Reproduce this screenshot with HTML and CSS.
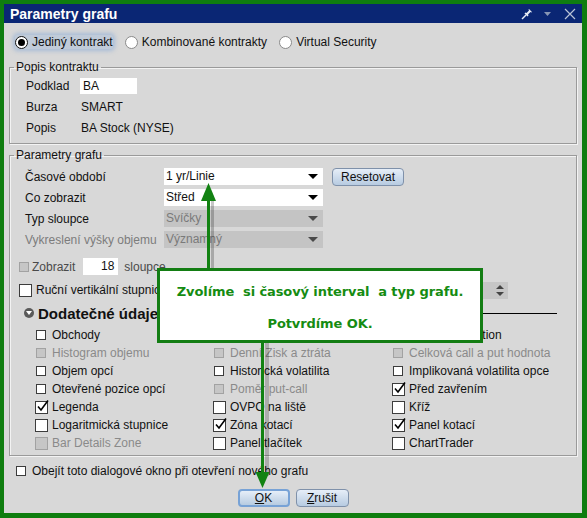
FILE: index.html
```html
<!DOCTYPE html>
<html>
  <head>
    <title>Parametry grafu</title>
    <link rel="stylesheet" href="styles.css">
  </head>
  <body>
    <div class="window">
      <div class="titlebar">
        <span class="title">Parametry grafu</span>
        <div class="tb-icons">
          <svg width="12" height="12" viewBox="0 0 12 12"><path d="M1 11 L5 7" stroke="#e8ecf4" stroke-width="1.4"/><path d="M3.5 5.5 L6.5 8.5 L7.5 7.5 L7 6.5 L9.5 4 L10.5 4.5 L11 4 L8 1 L7.5 1.5 L8 2.5 L5.5 5 L4.5 4.5 Z" fill="#e8ecf4"/></svg>
          <svg width="7" height="4" viewBox="0 0 7 4"><path d="M0 0 H7 L3.5 4 Z" fill="#8796b5"/></svg>
          <svg width="12" height="12" viewBox="0 0 12 12"><path d="M1 1 L11 11 M11 1 L1 11" stroke="#b9c2d6" stroke-width="1.2"/></svg>
        </div>
      </div>

      <div class="modes">
        <label class="radio focus"><span class="rb on"></span>Jediný kontrakt</label>
        <label class="radio"><span class="rb"></span>Kombinované kontrakty</label>
        <label class="radio"><span class="rb"></span>Virtual Security</label>
      </div>

      <fieldset class="group contract">
        <legend>Popis kontraktu</legend>
        <div class="kv"><span class="k">Podklad</span><span class="field">BA</span></div>
        <div class="kv"><span class="k">Burza</span><span class="v">SMART</span></div>
        <div class="kv"><span class="k">Popis</span><span class="v">BA Stock (NYSE)</span></div>
      </fieldset>

      <fieldset class="group chart">
        <legend>Parametry grafu</legend>
        <div class="prow">
          <span class="plabel">Časové období</span>
          <span class="select">1 yr/Linie<i class="caret"></i></span>
          <button class="btn reset">Resetovat</button>
        </div>
        <div class="prow">
          <span class="plabel">Co zobrazit</span>
          <span class="select">Střed<i class="caret"></i></span>
        </div>
        <div class="prow">
          <span class="plabel">Typ sloupce</span>
          <span class="select dis">Svíčky<i class="caret"></i></span>
        </div>
        <div class="prow">
          <span class="plabel muted">Vykreslení výšky objemu</span>
          <span class="select dis">Významný<i class="caret"></i></span>
        </div>

        <div class="bars">
          <span class="cb sm dis"></span>
          <span class="dim">Zobrazit</span>
          <span class="num">18</span>
          <span class="dim unit">sloupce</span>
        </div>

        <div class="manual">
          <span class="cb"></span>
          <span>Ruční vertikální stupnice</span>
          <span class="spinner">
            <svg width="8" height="11" viewBox="0 0 8 11"><path d="M0 4 L4 0 L8 4 Z M0 7 L8 7 L4 11 Z" fill="#444"/></svg>
          </span>
        </div>

        <div class="section">
          <span class="toggle"><svg width="6" height="4" viewBox="0 0 6 4"><path d="M0 0 H6 L3 4 Z" fill="#fff"/></svg></span>
          <span class="section-title">Dodatečné údaje</span>
          <span class="rule"></span>
        </div>

        <div class="options">
          <label class="opt"><span class="cb sm"></span>Obchody</label>
          <label class="opt"><span class="cb sm"></span>Zisk a ztráta</label>
          <label class="opt"><span class="cb sm"></span>Ukazatel Position</label>

          <label class="opt dis"><span class="cb sm dis"></span>Histogram objemu</label>
          <label class="opt dis"><span class="cb sm dis"></span>Denní Zisk a ztráta</label>
          <label class="opt dis"><span class="cb sm dis"></span>Celková call a put hodnota</label>

          <label class="opt"><span class="cb sm"></span>Objem opcí</label>
          <label class="opt"><span class="cb sm"></span>Historická volatilita</label>
          <label class="opt"><span class="cb sm"></span>Implikovaná volatilita opce</label>

          <label class="opt"><span class="cb sm"></span>Otevřené pozice opcí</label>
          <label class="opt dis"><span class="cb sm dis"></span>Poměr put-call</label>
          <label class="opt"><span class="cb on"><svg width="14" height="14" viewBox="0 0 14 14"><path d="M2 7.5 L5 11 L12 1.5" fill="none" stroke="#000" stroke-width="1.6"/></svg></span>Před zavřením</label>

          <label class="opt"><span class="cb on"><svg width="14" height="14" viewBox="0 0 14 14"><path d="M2 7.5 L5 11 L12 1.5" fill="none" stroke="#000" stroke-width="1.6"/></svg></span>Legenda</label>
          <label class="opt"><span class="cb"></span>OVPO na liště</label>
          <label class="opt"><span class="cb"></span>Kříž</label>

          <label class="opt"><span class="cb"></span>Logaritmická stupnice</label>
          <label class="opt"><span class="cb on"><svg width="14" height="14" viewBox="0 0 14 14"><path d="M2 7.5 L5 11 L12 1.5" fill="none" stroke="#000" stroke-width="1.6"/></svg></span>Zóna kotací</label>
          <label class="opt"><span class="cb on"><svg width="14" height="14" viewBox="0 0 14 14"><path d="M2 7.5 L5 11 L12 1.5" fill="none" stroke="#000" stroke-width="1.6"/></svg></span>Panel kotací</label>

          <label class="opt dis"><span class="cb dis"></span>Bar Details Zone</label>
          <label class="opt"><span class="cb"></span>Panel tlačítek</label>
          <label class="opt"><span class="cb"></span>ChartTrader</label>
        </div>
      </fieldset>

      <label class="bypass"><span class="cb sm"></span>Obejít toto dialogové okno při otevření nového grafu</label>

      <div class="actions">
        <button class="btn ok"><u>O</u>K</button>
        <button class="btn"><u>Z</u>rušit</button>
      </div>
    </div>

    <div class="callout">
      <p>Zvolíme&nbsp; si časový interval&nbsp; a typ grafu.</p>
      <p>Potvrdíme&nbsp;OK.</p>
    </div>

    <svg class="arrows" width="587" height="518" viewBox="0 0 587 518">
      <line x1="212.5" y1="200" x2="212.5" y2="268" stroke="rgba(0,0,0,0.22)" stroke-width="3"/>
      <line x1="208.5" y1="197" x2="208.5" y2="268" stroke="#128212" stroke-width="3"/>
      <path d="M201 201 L216 201 L208.5 183 Z" fill="#128212"/>
      <line x1="267" y1="343" x2="267" y2="476" stroke="rgba(0,0,0,0.2)" stroke-width="4"/>
      <line x1="262.5" y1="343" x2="262.5" y2="475" stroke="#128212" stroke-width="3"/>
      <path d="M255.5 472 L269.5 472 L262.5 488 Z" fill="#128212"/>
    </svg>
  </body>
</html>
```

FILE: styles.css
```css
body { margin: 0; position: relative; font-family: "Liberation Sans", Arial, sans-serif; font-size: 12px; color: #111; }

.window {
  width: 587px;
  height: 518px;
  box-sizing: border-box;
  border-style: solid;
  border-color: #0f7d0f;
  border-width: 4px 5px 5px 4px;
  background: #d8d8d8;
  display: flex;
  flex-direction: column;
}

/* title bar */
.titlebar { height: 19px; background: #0a2674; display: flex; align-items: center; padding: 0 6px 0 6px; }
.title { color: #fff; font-weight: bold; font-size: 14px; }
.tb-icons { margin-left: auto; display: flex; align-items: center; gap: 11px; }
.tb-icons svg:last-child { margin-left: 2px; }

/* top radio row */
.modes { display: flex; align-items: center; gap: 12px; height: 20px; margin-top: 9px; padding-left: 11px; }
.radio { display: flex; align-items: center; gap: 4px; }
.radio.focus { background: rgba(150, 180, 222, 0.35); box-shadow: 0 0 4px 2px rgba(130, 165, 215, 0.55); border-radius: 3px; }
.rb { width: 11px; height: 11px; border: 1px solid #8a8a8a; border-radius: 50%; background: #fff; position: relative; }
.rb.on { border-color: #111; }
.rb.on::after { content: ""; position: absolute; left: 2px; top: 2px; width: 7px; height: 7px; border-radius: 50%; background: #000; }

/* group boxes */
fieldset.group { margin: 0 5px; padding: 0; border: 1px solid #9a9a9a; box-shadow: inset 1px 1px 0 #f3f3f3, 1px 1px 0 #f3f3f3; min-width: 0; }
fieldset.group legend { padding: 0 2px; margin-left: 4px; line-height: 14px; }

.contract { margin-top: 8px !important; padding: 1px 0 5px 0 !important; }
.kv { display: flex; align-items: center; height: 21px; padding-left: 16px; }
.k { width: 54px; }
.field { width: 54px; height: 16px; line-height: 16px; padding-left: 3px; background: #fff; }
.v { padding-left: 1px; }

.chart { margin-top: 4px !important; padding: 4px 0 3px 0 !important; }
.prow { display: flex; align-items: center; height: 21px; padding-left: 15px; }
.plabel { width: 139px; }
.muted { color: #7c7c7c; }
.select { width: 157px; height: 17px; line-height: 17px; padding-left: 2px; background: #fff; position: relative; }
.select.dis { background: #c4c4c4; color: #7a7a7a; }
.caret { position: absolute; right: 5px; top: 6px; border-left: 5px solid transparent; border-right: 5px solid transparent; border-top: 5px solid #000; }
.select.dis .caret { border-top-color: #4a4a4a; }

.btn { font-family: "Liberation Sans", Arial, sans-serif; font-size: 12px; color: #111; height: 18px; padding: 0; border: 1px solid #7f91aa; border-radius: 4px; background: linear-gradient(#e6eef8, #b7cbe1); }
.reset { width: 72px; margin-left: 9px; }

.bars { display: flex; align-items: center; height: 21px; margin-top: 6px; padding-left: 9px; }
.bars > .cb.sm { margin-right: 3px; }
.dim { color: #4a4a4a; }
.num { width: 31px; height: 17px; line-height: 17px; background: #fff; text-align: right; padding-right: 4px; margin-left: 8px; }
.unit { margin-left: 6px; }

.manual { display: flex; align-items: center; gap: 4px; height: 20px; margin-top: 3px; padding-left: 9px; }
.spinner { margin-left: auto; margin-right: 68px; width: 120px; height: 17px; background: #c6c6c6; display: flex; align-items: center; justify-content: flex-end; padding-right: 4px; box-sizing: border-box; }

.section { display: flex; align-items: center; height: 20px; margin-top: 3px; padding-left: 14px; }
.toggle { width: 10px; height: 10px; border-radius: 50%; background: #5a5a5a; display: flex; align-items: center; justify-content: center; }
.section-title { font-weight: bold; font-size: 15px; margin-left: 4px; }
.rule { flex: 1; height: 1px; background: #000; margin: 0 19px 0 6px; }

.options { display: grid; grid-template-columns: 178px 179px 1fr; grid-auto-rows: 18px; margin-top: 3px; padding-left: 26px; }
.opt { display: flex; align-items: center; white-space: nowrap; }
.opt.dis { color: #8a8a8a; }

/* checkboxes */
.cb { width: 11px; height: 11px; box-sizing: border-box; border: 1px solid #3c3c3c; background: #fff; position: relative; flex: none; margin-right: 4px; margin-left: -1px; }
.cb.sm { width: 10px; height: 10px; margin-left: 0; margin-right: 6px; }
.opt > .cb:not(.sm) { width: 13px; height: 13px; }
.manual > .cb { width: 13px; height: 13px; margin: 0; }
.cb.dis { background: #c6c6c6; border-color: #a2a2a2; }
.cb.on svg { position: absolute; left: 0; top: -3px; }

.bypass { display: flex; align-items: center; height: 18px; margin-top: 6px; padding-left: 12px; }

.actions { display: flex; justify-content: center; gap: 6px; margin-top: 9px; }
.actions .btn { width: 53px; }
.actions .ok { width: 52px; border: 2px solid #77a2d6; }

/* annotation overlay */
.callout {
  position: absolute;
  left: 157px;
  top: 268px;
  width: 320px;
  height: 69px;
  background: #fff;
  border: 3px solid #137d13;
  font-family: "DejaVu Sans", Verdana, sans-serif;
  font-weight: bold;
  font-size: 13px;
  letter-spacing: -0.1px;
  color: #158c12;
  text-align: center;
}
.callout p { margin: 0; }
.callout p:first-child { margin-top: 13px; }
.callout p:last-child { margin-top: 17px; }

.arrows { position: absolute; left: 0; top: 0; pointer-events: none; }
```
